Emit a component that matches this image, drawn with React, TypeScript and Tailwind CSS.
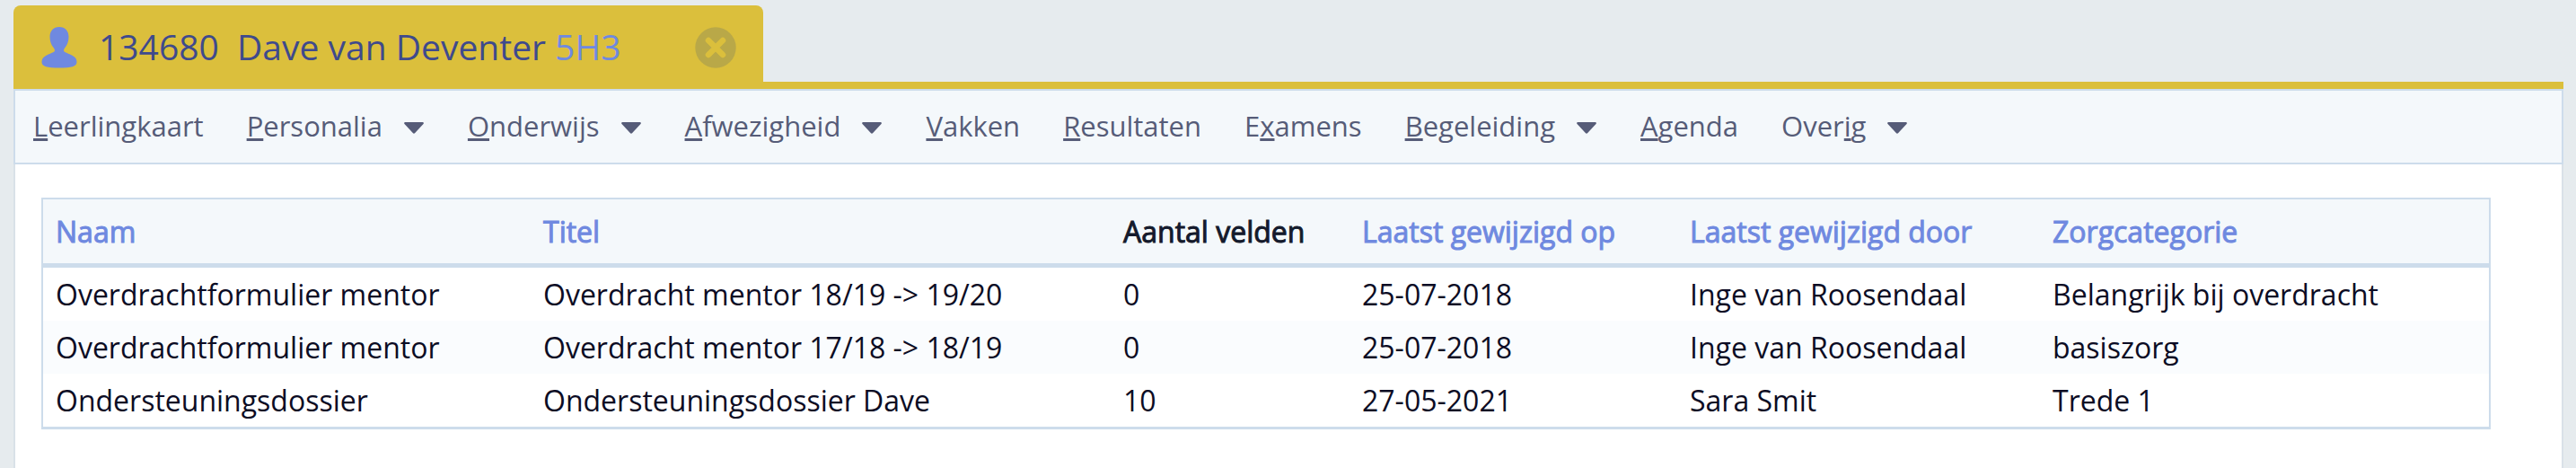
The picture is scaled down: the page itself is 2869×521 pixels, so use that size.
type MenuItem = {
  label: string;
  // index of the underlined access key letter
  hotkey: number;
  dropdown?: boolean;
};

const menuItems: MenuItem[] = [
  { label: 'Leerlingkaart', hotkey: 0 },
  { label: 'Personalia', hotkey: 0, dropdown: true },
  { label: 'Onderwijs', hotkey: 0, dropdown: true },
  { label: 'Afwezigheid', hotkey: 0, dropdown: true },
  { label: 'Vakken', hotkey: 0 },
  { label: 'Resultaten', hotkey: 0 },
  { label: 'Examens', hotkey: 1 },
  { label: 'Begeleiding', hotkey: 0, dropdown: true },
  { label: 'Agenda', hotkey: 0 },
  { label: 'Overig', hotkey: 4, dropdown: true },
];

const columns = [
  { title: 'Naam', width: 'w-[543px]', sortable: true },
  { title: 'Titel', width: 'w-[646px]', sortable: true },
  { title: 'Aantal velden', width: 'w-[266px]', sortable: false },
  { title: 'Laatst gewijzigd op', width: 'w-[365px]', sortable: true },
  { title: 'Laatst gewijzigd door', width: 'w-[404px]', sortable: true },
  { title: 'Zorgcategorie', width: '', sortable: true },
];

const rows = [
  ['Overdrachtformulier mentor', 'Overdracht mentor 18/19 -> 19/20', '0', '25-07-2018', 'Inge van Roosendaal', 'Belangrijk bij overdracht'],
  ['Overdrachtformulier mentor', 'Overdracht mentor 17/18 -> 18/19', '0', '25-07-2018', 'Inge van Roosendaal', 'basiszorg'],
  ['Ondersteuningsdossier', 'Ondersteuningsdossier Dave', '10', '27-05-2021', 'Sara Smit', 'Trede 1'],
];

function PersonIcon() {
  return (
    <svg viewBox="0 0 40 46" className="h-[46px] w-10 shrink-0" fill="#6f89e0" aria-hidden="true">
      <path d="M20 0C13.500 0 9.500 4.500 9.500 11C9.500 16 11 19.500 13.200 22.500C14.600 24.500 15.400 25.500 14.800 27C14 28.500 9.500 29.500 5.500 31.800C2.200 33.600 .5 35.800 .5 39C.5 44 6.500 45.500 20 45.500S39.500 44 39.500 39C39.500 35.800 37.800 33.600 34.500 31.800C30.500 29.500 26 28.500 25.200 27C24.600 25.500 25.400 24.500 26.800 22.500C29 19.500 30.500 16 30.500 11C30.500 4.500 26.500 0 20 0Z" />
    </svg>
  );
}

function CloseIcon() {
  return (
    <svg viewBox="0 0 46 46" className="size-[46px]" aria-hidden="true">
      <circle cx="23" cy="23" r="22.700" fill="#b9a848" />
      <path d="M15 15L31 31M31 15L15 31" stroke="#dbbf3c" strokeWidth="6.500" strokeLinecap="round" />
    </svg>
  );
}

function CaretIcon() {
  return (
    <svg viewBox="0 0 22 13" className="mt-1 mr-px h-[13px] w-[22px]" fill="#565c78" aria-hidden="true">
      <path d="M1 0H21Q22.500 .8 21.500 2L12.200 12Q11 13.500 9.800 12L.5 2Q-.5 .8 1 0Z" />
    </svg>
  );
}

function MenuLabel({ label, hotkey }: MenuItem) {
  return (
    <span>
      {label.slice(0, hotkey)}
      <span className="underline decoration-[3px] underline-offset-2 [text-decoration-skip-ink:none]">{label[hotkey]}</span>
      {label.slice(hotkey + 1)}
    </span>
  );
}

export default function App() {
  return (
    <div className="min-h-screen flex flex-col bg-[#e6ebee] px-[15px] pt-1.5 pr-[14px] font-['Open_Sans','Noto_Sans',sans-serif]">
      <header className="flex border-b-8 border-[#dbbf3c]">
        <div className="flex h-[85px] w-[835px] items-center rounded-t-lg bg-[#dbbf3c] pt-2 pr-[30px] pl-[31px]">
          <PersonIcon />
          <h1 className="ml-6 pb-0.5 text-[39px] leading-[52px] whitespace-pre text-[#3f4a8c]">
            134680{'  '}Dave van Deventer <span className="text-[#6f89e0]">5H3</span>
          </h1>
          <button type="button" aria-label="Sluiten" className="ml-auto">
            <CloseIcon />
          </button>
        </div>
      </header>

      <nav className="flex h-[84px] items-center gap-12 border-2 border-[#cddceb] bg-[#f4f8fb] pb-0.5 pl-5 text-[31px] leading-[42px] text-[#565c78]">
        {menuItems.map((item) =>
          item.dropdown ? (
            <button key={item.label} type="button" className="flex items-center gap-6">
              <MenuLabel {...item} />
              <CaretIcon />
            </button>
          ) : (
            <a key={item.label} href="#">
              <MenuLabel {...item} />
            </a>
          ),
        )}
      </nav>

      <main className="grow border-x-2 border-[#d9e1e8] bg-white pt-[37px] pr-[79px] pb-10 pl-[29px]">
        <div className="border-2 border-b-3 border-[#cddceb]">
          <table className="w-full table-fixed border-separate border-spacing-0 text-left text-[32px] leading-[43px] text-[#0c0c24]">
            <thead className="bg-[#f4f8fb]">
              <tr>
                {columns.map((col) => (
                  <th
                    key={col.title}
                    scope="col"
                    className={`${col.width} h-[76px] border-b-5 border-[#cddceb] pl-[14px] font-normal whitespace-nowrap [-webkit-text-stroke:1px] ${
                      col.sortable ? 'text-[#6f89e0]' : 'text-[#141a2c]'
                    }`}
                  >
                    {col.title}
                  </th>
                ))}
              </tr>
            </thead>
            <tbody>
              {rows.map((row, i) => (
                <tr key={i} className="h-[59px] even:bg-[#fafcfe]">
                  {row.map((cell, j) => (
                    <td key={j} className="pl-[14px] whitespace-nowrap">
                      {cell}
                    </td>
                  ))}
                </tr>
              ))}
            </tbody>
          </table>
        </div>
      </main>
    </div>
  );
}
